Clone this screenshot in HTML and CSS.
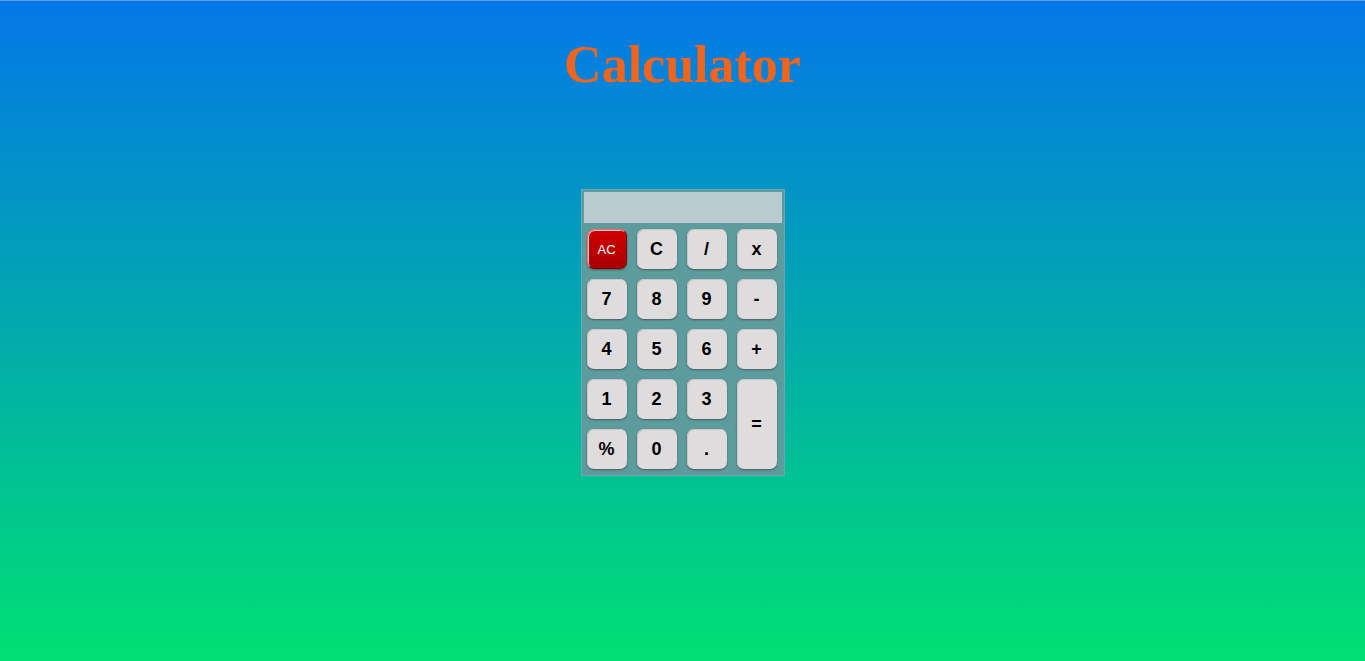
FILE: index.html
```html
<!DOCTYPE html>
<html lang="en">
<head>
<meta charset="utf-8">
<title>Calculator</title>
<link rel="stylesheet" href="styles.css">
</head>
<body>
<h1 class="title">Calculator</h1>
<div class="calc">
  <div class="display"></div>
  <div class="keys">
    <button class="key key-ac">AC</button>
    <button class="key">C</button>
    <button class="key">/</button>
    <button class="key">x</button>
    <button class="key">7</button>
    <button class="key">8</button>
    <button class="key">9</button>
    <button class="key">-</button>
    <button class="key">4</button>
    <button class="key">5</button>
    <button class="key">6</button>
    <button class="key">+</button>
    <button class="key">1</button>
    <button class="key">2</button>
    <button class="key">3</button>
    <button class="key key-eq">=</button>
    <button class="key">%</button>
    <button class="key">0</button>
    <button class="key">.</button>
  </div>
</div>
</body>
</html>
```
FILE: styles.css
```css
html, body {
  margin: 0;
  height: 100%;
}
body {
  background: linear-gradient(to bottom, #0377e8 0%, #02aaac 50%, #00e074 100%);
  border-top: 1px solid #5d9ae6;
  box-sizing: border-box;
  display: flex;
  flex-direction: column;
  align-items: center;
}
.title {
  margin: 34px 0 0;
  font-family: "Liberation Serif", "Times New Roman", serif;
  font-weight: bold;
  font-size: 52px;
  line-height: normal;
  color: #f0651b;
}
.calc {
  margin-top: 95px;
  width: 198px;
  padding: 2px 2px 6px;
  border: 1px solid #6aa7b6;
  background: #5d9c9e;
}
.display {
  height: 31px;
  background: #b9cbcf;
}
.keys {
  display: grid;
  grid-template-columns: repeat(4, 40px);
  grid-auto-rows: 40px;
  gap: 10px;
  padding: 6px 3px 0;
}
.key {
  border: none;
  border-radius: 7px;
  background: #dedcdc;
  box-shadow: 0 1px 2px rgba(70, 60, 60, 0.7), inset 1px 1px 0 #c9c6c6;
  font-family: "Liberation Sans", Arial, sans-serif;
  font-weight: bold;
  font-size: 18px;
  color: #000;
  padding: 0;
}
.key-ac {
  background: linear-gradient(to bottom, #d20000, #a80000);
  border: 1px solid #ff6a6a;
  border-bottom-color: #7a0000;
  border-right-color: #8a0000;
  font-weight: normal;
  font-size: 13px;
  color: #fff;
}
.key-eq {
  grid-row: span 2;
}
```
